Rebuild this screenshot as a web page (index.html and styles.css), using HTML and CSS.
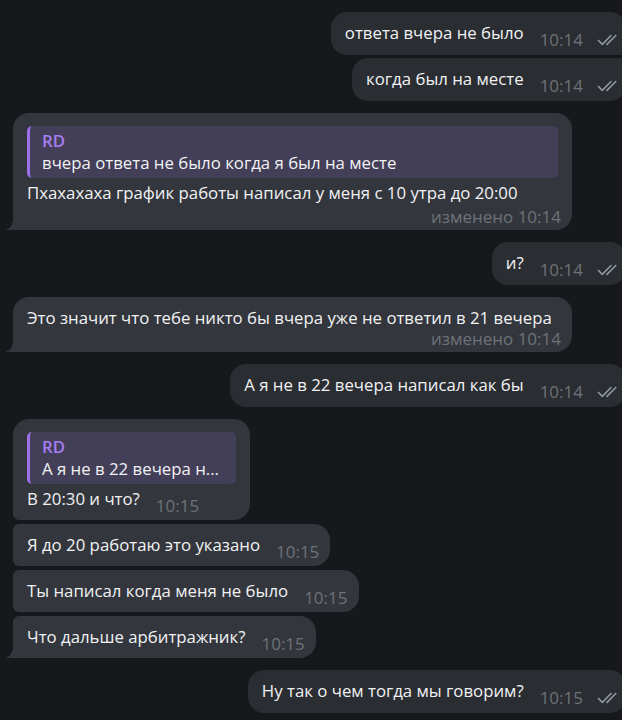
FILE: index.html
```html
<!DOCTYPE html>
<html lang="ru">
<head>
    <meta charset="UTF-8">
    <title>Чат</title>
    <link rel="stylesheet" href="styles.css">
</head>
<body>
    <div class="chat">
        <div class="msg out first">
            <div class="body"><span class="text">ответа вчера не было</span><span class="meta">10:14 <svg class="check" viewBox="0 0 22 12"><path d="M1.5 6.5l3.8 3.8L14 1.5M10 10.3L18.8 1.5"/></svg></span></div>
        </div>
        <div class="msg out last">
            <div class="body"><span class="text">когда был на месте</span><span class="meta">10:14 <svg class="check" viewBox="0 0 22 12"><path d="M1.5 6.5l3.8 3.8L14 1.5M10 10.3L18.8 1.5"/></svg></span></div>
        </div>

        <div class="msg in tail group wide">
            <div class="reply">
                <div class="reply-name">RD</div>
                <div class="reply-text">вчера ответа не было когда я был на месте</div>
            </div>
            <div class="body wrap"><span class="text">Пхахахаха график работы написал у меня с 10 утра до 20:00</span><span class="meta">изменено 10:14</span></div>
        </div>

        <div class="msg out group">
            <div class="body"><span class="text">и?</span><span class="meta">10:14 <svg class="check" viewBox="0 0 22 12"><path d="M1.5 6.5l3.8 3.8L14 1.5M10 10.3L18.8 1.5"/></svg></span></div>
        </div>

        <div class="msg in tail group wide">
            <div class="body wrap"><span class="text">Это значит что тебе никто бы вчера уже не ответил в 21 вечера</span><span class="meta">изменено 10:14</span></div>
        </div>

        <div class="msg out group">
            <div class="body"><span class="text">А я не в 22 вечера написал как бы</span><span class="meta">10:14 <svg class="check" viewBox="0 0 22 12"><path d="M1.5 6.5l3.8 3.8L14 1.5M10 10.3L18.8 1.5"/></svg></span></div>
        </div>

        <div class="msg in first group">
            <div class="reply short">
                <div class="reply-name">RD</div>
                <div class="reply-text">А я не в 22 вечера н...</div>
            </div>
            <div class="body"><span class="text">В 20:30 и что?</span><span class="meta">10:15</span></div>
        </div>
        <div class="msg in mid">
            <div class="body"><span class="text">Я до 20 работаю это указано</span><span class="meta">10:15</span></div>
        </div>
        <div class="msg in mid">
            <div class="body"><span class="text">Ты написал когда меня не было</span><span class="meta">10:15</span></div>
        </div>
        <div class="msg in mid tail">
            <div class="body"><span class="text">Что дальше арбитражник?</span><span class="meta">10:15</span></div>
        </div>

        <div class="msg out group">
            <div class="body"><span class="text">Ну так о чем тогда мы говорим?</span><span class="meta">10:15 <svg class="check" viewBox="0 0 22 12"><path d="M1.5 6.5l3.8 3.8L14 1.5M10 10.3L18.8 1.5"/></svg></span></div>
        </div>
    </div>
</body>
</html>
```

FILE: styles.css
```css
html, body {
    margin: 0;
    overflow: hidden;
    background: #17181c;
}
body {
    width: 622px;
    height: 720px;
    font-family: "Open Sans", "Noto Sans", sans-serif;
    color: #f1f2f4;
}
.chat {
    display: flex;
    flex-direction: column;
    gap: 4px;
    padding: 12px 0 0 13px;
    margin-right: -4px;
}
.msg {
    position: relative;
    box-sizing: border-box;
    max-width: 559px;
    padding: 10px 11px 11px 14px;
    border-radius: 16px;
    font-size: 16.8px;
    line-height: 21px;
}
.msg.wide { width: 559px; }
.msg.group { margin-top: 8px; }
.in {
    align-self: flex-start;
    background: #33363c;
}
.out {
    align-self: flex-end;
    background: #2a2d32;
    padding: 10px 7px 12px 14px;
}
.out.last { margin-top: -1px; }
.in.first { border-bottom-left-radius: 6px; }
.in.mid { border-radius: 6px 16px 16px 6px; }
.out.first { border-bottom-right-radius: 6px; }
.out.last { border-top-right-radius: 6px; }
.in.tail { border-bottom-left-radius: 0; }
.in.tail::before {
    content: "";
    position: absolute;
    left: -8px;
    bottom: 0;
    width: 8px;
    height: 11px;
    background: radial-gradient(ellipse 8px 11px at 0 0, transparent 96%, #33363c 100%);
}
.body {
    display: flex;
    align-items: flex-end;
}
.body.wrap {
    flex-direction: column;
    align-items: stretch;
}
.meta {
    display: flex;
    align-items: center;
    flex-shrink: 0;
    margin-left: 16px;
    margin-bottom: -7px;
    font-size: 17px;
    line-height: 20px;
    color: #6d7278;
    white-space: nowrap;
}
.wrap .meta {
    align-self: flex-end;
    margin: 1px 0 -7px;
    line-height: 19px;
}
.reply ~ .wrap .meta { margin-top: 4px; }
.check {
    width: 22px;
    height: 12px;
    margin-left: 14px;
    fill: none;
    stroke: #8d96a1;
    stroke-width: 1.7;
    stroke-linecap: round;
    stroke-linejoin: round;
}
.msg .reply ~ .body { margin-top: 4px; }
.msg:has(.reply) { padding-top: 13px; }
.reply {
    box-sizing: border-box;
    margin-right: 3px;
    background: #443f58;
    border-left: 3px solid #9d70e9;
    border-radius: 5px;
    padding: 4px 10px 4px 12px;
    line-height: 22px;
}
.reply-name {
    font-weight: 600;
    color: #a47ef2;
}
.reply-text {
    white-space: nowrap;
    overflow: hidden;
}
.reply.short { width: 209px; }
```
